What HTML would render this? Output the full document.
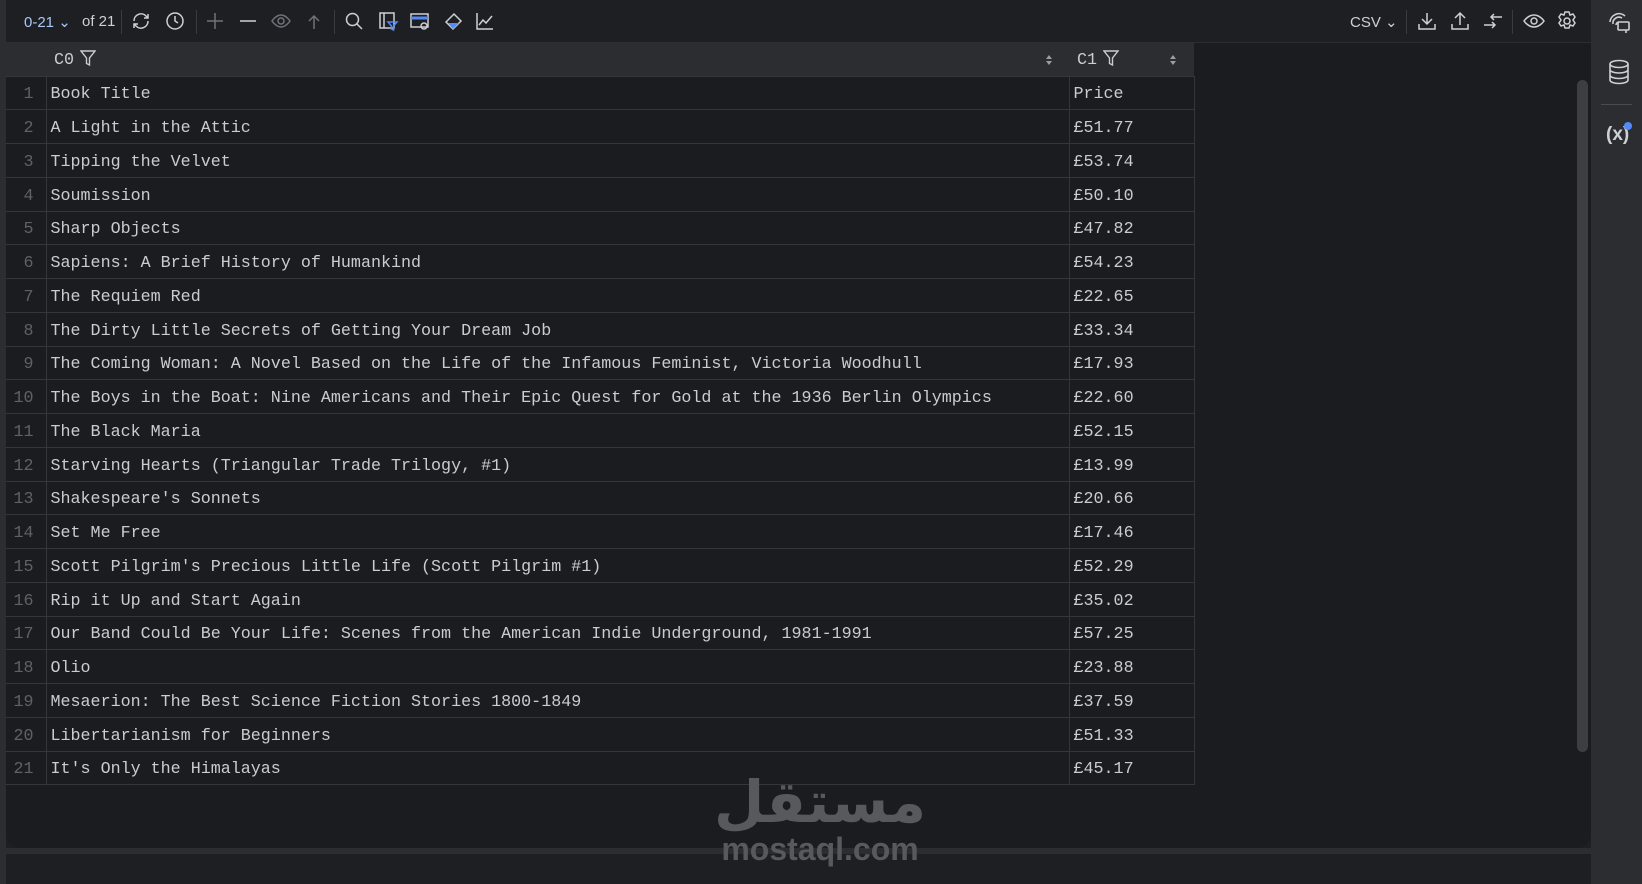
<!DOCTYPE html>
<html><head><meta charset="utf-8"><style>
*{margin:0;padding:0;box-sizing:border-box}
body{width:1642px;height:884px;background:#1e1f22;position:relative;overflow:hidden;font-family:"Liberation Sans",sans-serif;color:#bcbec4}
.left{position:absolute;left:0;top:0;width:6px;height:884px;background:#2b2d30}
.panel{position:absolute;left:6px;top:0;width:1585px;height:848px;background:#1b1c1f;border-bottom-left-radius:14px;border-bottom-right-radius:14px}
.gap{position:absolute;left:0;top:848px;width:1591px;height:6px;background:#2b2d30}
.side{position:absolute;left:1591px;top:0;width:51px;height:884px;background:#2b2d30}
.tb{position:absolute;left:6px;top:0;width:1585px;height:43px;background:#1e1f22;border-bottom:1px solid #2b2d30}
.t{position:absolute;font-size:15px;color:#ced0d6;top:13px}
.ic{position:absolute;top:10px;width:22px;height:22px}
.sep{position:absolute;top:10px;width:1px;height:24px;background:#393b40}
table{position:absolute;left:6px;top:43px;border-collapse:collapse;font-family:"Liberation Mono",monospace;font-size:16.7px;table-layout:fixed}
td{height:33.75px;border:1px solid #35363a;color:#c9ccd2;padding:4px 0 0 4px;white-space:pre;vertical-align:middle;overflow:hidden}
td.n{width:40px;color:#5e6166;text-align:right;padding:4px 12px 0 0;border-left:none}
td.a{width:1023px}
td.b{width:125px}
tr.h td{background:#2b2d30;border:none;height:33px;color:#c9ccd2;position:relative}
.scroll{position:absolute;left:1577px;top:80px;width:11px;height:672px;background:#3c3e42;border-radius:6px}
svg{display:block}
.fil{display:inline-block;vertical-align:-3px;margin-left:6px}
.srt{position:absolute;top:11px}
.wm{position:absolute;left:650px;width:340px;text-align:center;color:#58595c;font-weight:bold}
</style></head><body>
<div class="left"></div>
<div class="panel"></div>
<div class="gap"></div>
<div class="side">
<svg style="position:absolute;left:16px;top:10px" width="24" height="24" viewBox="0 0 24 24" fill="none" stroke="#ced0d6" stroke-width="1.6"><path d="M3 12a9 9 0 0 1 15-6M6 14a6 6 0 0 1 9-6M9 15a3 3 0 0 1 3-3"/><rect x="11" y="12" width="11" height="8" rx="1"/><path d="M19 20v3"/></svg>
<svg style="position:absolute;left:17px;top:59px" width="22" height="26" viewBox="0 0 22 26" fill="none" stroke="#ced0d6" stroke-width="1.6"><ellipse cx="11" cy="5" rx="9" ry="3.5"/><path d="M2 5v16c0 2 4 3.5 9 3.5s9-1.5 9-3.5V5M2 10.5c0 2 4 3.5 9 3.5s9-1.5 9-3.5M2 16c0 2 4 3.5 9 3.5s9-1.5 9-3.5"/></svg>
<div style="position:absolute;left:10px;top:104px;width:31px;height:1px;background:#4a4c50"></div>
<div style="position:absolute;left:15px;top:124px;font-size:19px;font-weight:bold;color:#ced0d6">(x)</div>
<div style="position:absolute;left:33px;top:122px;width:8px;height:8px;border-radius:50%;background:#548af7"></div>
</div>
<div class="tb">
<div class="t" style="left:18px;color:#a8c7fa">0-21 ⌄</div>
<div class="t" style="left:76px">of 21</div>
<div class="sep" style="left:115px"></div>
<svg class="ic" style="left:124px" viewBox="0 0 22 22" fill="none" stroke="#ced0d6" stroke-width="1.5"><path d="M4 11a7 7 0 0 1 12-5l2 2M18 11a7 7 0 0 1-12 5l-2-2M18 4v4h-4M4 18v-4h4"/></svg>
<svg class="ic" style="left:158px" viewBox="0 0 22 22" fill="none" stroke="#ced0d6" stroke-width="1.5"><circle cx="11" cy="11" r="8"/><path d="M11 6v5l3 2"/></svg>
<div class="sep" style="left:190px"></div>
<svg class="ic" style="left:198px" viewBox="0 0 22 22" stroke="#6f737a" stroke-width="1.5"><path d="M11 3v16M3 11h16"/></svg>
<svg class="ic" style="left:231px" viewBox="0 0 22 22" stroke="#ced0d6" stroke-width="1.5"><path d="M3 11h16"/></svg>
<svg class="ic" style="left:264px" viewBox="0 0 22 22" fill="none" stroke="#6f737a" stroke-width="1.5"><path d="M2 11s4-6 9-6 9 6 9 6-4 6-9 6-9-6-9-6z"/><circle cx="11" cy="11" r="3"/></svg>
<svg class="ic" style="left:297px" viewBox="0 0 22 22" fill="none" stroke="#6f737a" stroke-width="1.5"><path d="M11 19V6M6 11l5-5 5 5"/></svg>
<div class="sep" style="left:328px"></div>
<svg class="ic" style="left:337px" viewBox="0 0 22 22" fill="none" stroke="#ced0d6" stroke-width="1.5"><circle cx="9.5" cy="9.5" r="6"/><path d="M14 14l5 5"/></svg>
<svg class="ic" style="left:371px" viewBox="0 0 22 22" fill="none" stroke="#ced0d6" stroke-width="1.5"><rect x="3" y="3" width="14" height="15"/><path d="M7 3v15"/><path d="M11 12h9l-3.5 4v4l-2-1v-3z" stroke="#548af7"/></svg>
<svg class="ic" style="left:403px" viewBox="0 0 22 22" fill="none" stroke="#ced0d6" stroke-width="1.5"><rect x="2" y="4" width="17" height="13"/><path d="M2 8h17" stroke="#548af7" stroke-width="3"/><circle cx="15" cy="16" r="3"/></svg>
<svg class="ic" style="left:436px" viewBox="0 0 22 22" fill="none" stroke="#ced0d6" stroke-width="1.5"><path d="M4 12l8-8 7 7-8 8z"/><path d="M6 13h11l-6 6z" fill="#548af7" stroke="none"/></svg>
<svg class="ic" style="left:468px" viewBox="0 0 22 22" fill="none" stroke="#ced0d6" stroke-width="1.5"><path d="M3 3v16h16M5 15l4-5 3 3 6-7"/></svg>
<div class="t" style="left:1344px">CSV ⌄</div>
<div class="sep" style="left:1400px"></div>
<svg class="ic" style="left:1410px" viewBox="0 0 22 22" fill="none" stroke="#ced0d6" stroke-width="1.5"><path d="M11 3v11M6 9l5 5 5-5M3 14v5h16v-5"/></svg>
<svg class="ic" style="left:1443px" viewBox="0 0 22 22" fill="none" stroke="#ced0d6" stroke-width="1.5"><path d="M11 15V3M6 8l5-5 5 5M3 14v5h16v-5"/></svg>
<svg class="ic" style="left:1476px" viewBox="0 0 22 22" fill="none" stroke="#ced0d6" stroke-width="1.5"><path d="M20 7H9M12 4L9 7l3 3M2 15h11M10 12l3 3-3 3"/></svg>
<div class="sep" style="left:1506px"></div>
<svg class="ic" style="left:1517px" viewBox="0 0 22 22" fill="none" stroke="#ced0d6" stroke-width="1.5"><path d="M1 11s4-6 10-6 10 6 10 6-4 6-10 6S1 11 1 11z"/><circle cx="11" cy="11" r="3"/></svg>
<svg class="ic" style="left:1550px" viewBox="0 0 22 22" fill="none" stroke="#ced0d6" stroke-width="1.5"><circle cx="11" cy="11" r="3"/><path d="M9 2h4l1 3 3-1 2 3-2 3 2 3-2 3-3-1-1 3H9l-1-3-3 1-2-3 2-3-2-3 2-3 3 1z"/></svg>
</div>
<table>
<tr class="h"><td class="n" style="border:none"></td><td class="a" style="padding:2px 0 0 8px">C0<svg class="fil" width="16" height="17" viewBox="0 0 16 17" fill="none" stroke="#c9ccd2" stroke-width="1.4"><path d="M1 1h14L9.5 8v7l-3-1.5V8z"/></svg><svg class="srt" style="right:16px" width="8" height="12" viewBox="0 0 8 12" fill="#9a9da3"><path d="M4 1l3 4H1zM4 11l3-4H1z"/></svg></td><td class="b" style="padding:2px 0 0 8px">C1<svg class="fil" width="16" height="17" viewBox="0 0 16 17" fill="none" stroke="#c9ccd2" stroke-width="1.4"><path d="M1 1h14L9.5 8v7l-3-1.5V8z"/></svg><svg class="srt" style="right:17px" width="8" height="12" viewBox="0 0 8 12" fill="#9a9da3"><path d="M4 1l3 4H1zM4 11l3-4H1z"/></svg></td></tr>
<tr><td class="n">1</td><td class="a">Book Title</td><td class="b">Price</td></tr>
<tr><td class="n">2</td><td class="a">A Light in the Attic</td><td class="b">£51.77</td></tr>
<tr><td class="n">3</td><td class="a">Tipping the Velvet</td><td class="b">£53.74</td></tr>
<tr><td class="n">4</td><td class="a">Soumission</td><td class="b">£50.10</td></tr>
<tr><td class="n">5</td><td class="a">Sharp Objects</td><td class="b">£47.82</td></tr>
<tr><td class="n">6</td><td class="a">Sapiens: A Brief History of Humankind</td><td class="b">£54.23</td></tr>
<tr><td class="n">7</td><td class="a">The Requiem Red</td><td class="b">£22.65</td></tr>
<tr><td class="n">8</td><td class="a">The Dirty Little Secrets of Getting Your Dream Job</td><td class="b">£33.34</td></tr>
<tr><td class="n">9</td><td class="a">The Coming Woman: A Novel Based on the Life of the Infamous Feminist, Victoria Woodhull</td><td class="b">£17.93</td></tr>
<tr><td class="n">10</td><td class="a">The Boys in the Boat: Nine Americans and Their Epic Quest for Gold at the 1936 Berlin Olympics</td><td class="b">£22.60</td></tr>
<tr><td class="n">11</td><td class="a">The Black Maria</td><td class="b">£52.15</td></tr>
<tr><td class="n">12</td><td class="a">Starving Hearts (Triangular Trade Trilogy, #1)</td><td class="b">£13.99</td></tr>
<tr><td class="n">13</td><td class="a">Shakespeare's Sonnets</td><td class="b">£20.66</td></tr>
<tr><td class="n">14</td><td class="a">Set Me Free</td><td class="b">£17.46</td></tr>
<tr><td class="n">15</td><td class="a">Scott Pilgrim's Precious Little Life (Scott Pilgrim #1)</td><td class="b">£52.29</td></tr>
<tr><td class="n">16</td><td class="a">Rip it Up and Start Again</td><td class="b">£35.02</td></tr>
<tr><td class="n">17</td><td class="a">Our Band Could Be Your Life: Scenes from the American Indie Underground, 1981-1991</td><td class="b">£57.25</td></tr>
<tr><td class="n">18</td><td class="a">Olio</td><td class="b">£23.88</td></tr>
<tr><td class="n">19</td><td class="a">Mesaerion: The Best Science Fiction Stories 1800-1849</td><td class="b">£37.59</td></tr>
<tr><td class="n">20</td><td class="a">Libertarianism for Beginners</td><td class="b">£51.33</td></tr>
<tr><td class="n">21</td><td class="a">It's Only the Himalayas</td><td class="b">£45.17</td></tr>
</table>
<div class="scroll"></div>
<div class="wm" style="top:766px;font-size:58px;line-height:72px;font-family:'DejaVu Sans',sans-serif">مستقل</div>
<div class="wm" style="top:830px;font-size:32px;line-height:38px">mostaql.com</div>
</body></html>
